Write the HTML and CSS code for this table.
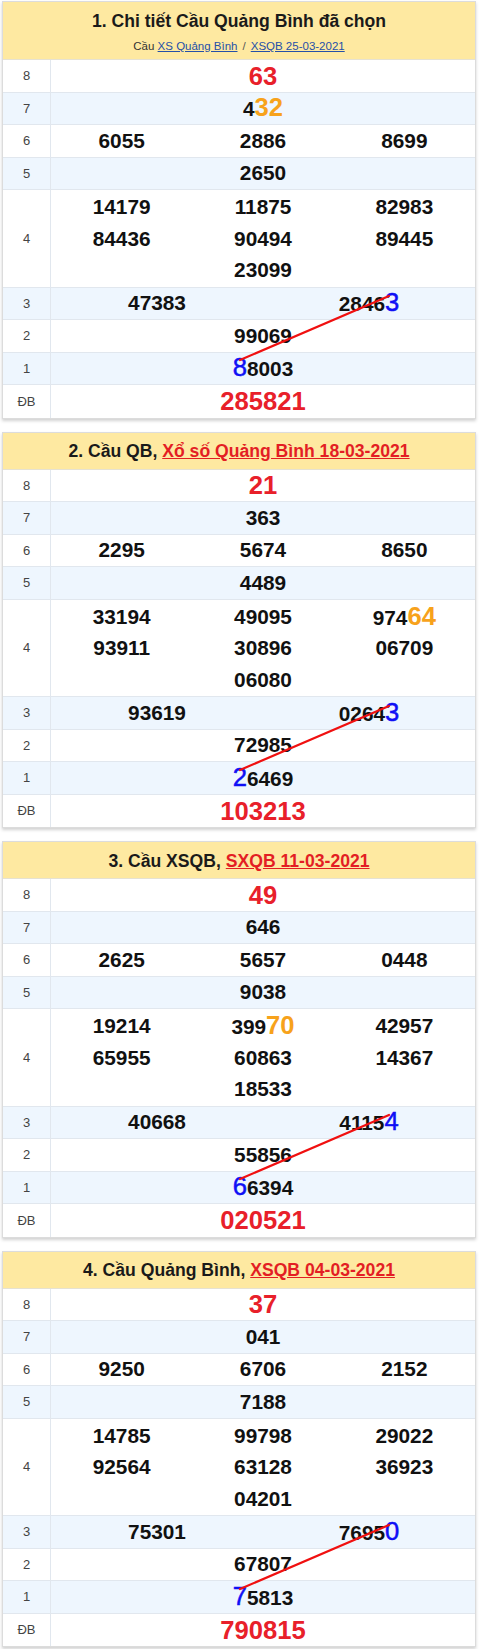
FILE: index.html
```html
<!DOCTYPE html>
<html lang="vi">
<head>
<meta charset="utf-8">
<title>Cầu Quảng Bình</title>
<link rel="stylesheet" href="styles.css">
</head>
<body>
<div class="page">

  <section class="card">
    <header class="head head-double">
      <h2 class="title">1. Chi tiết Cầu Quảng Bình đã chọn</h2>
      <p class="sub">Cầu <a class="sub-link" href="#">XS Quảng Bình</a><span class="sep">/</span><a class="sub-link" href="#">XSQB 25-03-2021</a></p>
    </header>
    <div class="board">
      <div class="row"><div class="lbl">8</div><div class="vals cols-1"><span class="n hl red">63</span></div></div>
      <div class="row alt"><div class="lbl">7</div><div class="vals cols-1"><span class="n">4<span class="hl org">32</span></span></div></div>
      <div class="row"><div class="lbl">6</div><div class="vals cols-3"><span class="n">6055</span><span class="n">2886</span><span class="n">8699</span></div></div>
      <div class="row alt"><div class="lbl">5</div><div class="vals cols-1"><span class="n">2650</span></div></div>
      <div class="row tall"><div class="lbl">4</div><div class="vals cols-3"><span class="n">14179</span><span class="n">11875</span><span class="n">82983</span><span class="n">84436</span><span class="n">90494</span><span class="n">89445</span><span class="n mid">23099</span></div></div>
      <div class="row alt"><div class="lbl">3</div><div class="vals cols-2"><span class="n">47383</span><span class="n">2846<span class="hl blu">3</span></span></div></div>
      <div class="row"><div class="lbl">2</div><div class="vals cols-1"><span class="n">99069</span></div></div>
      <div class="row alt"><div class="lbl">1</div><div class="vals cols-1"><span class="n"><span class="hl blu">8</span>8003</span></div></div>
      <div class="row last"><div class="lbl">ĐB</div><div class="vals cols-1"><span class="n hl red">285821</span></div></div>
      <svg class="bridge" width="472" height="358"><line x1="237" y1="300" x2="386" y2="236"/></svg>
    </div>
  </section>

  <section class="card">
    <header class="head">
      <h2 class="title">2. Cầu QB, <a class="head-link" href="#">Xổ số Quảng Bình 18-03-2021</a></h2>
    </header>
    <div class="board">
      <div class="row"><div class="lbl">8</div><div class="vals cols-1"><span class="n hl red">21</span></div></div>
      <div class="row alt"><div class="lbl">7</div><div class="vals cols-1"><span class="n">363</span></div></div>
      <div class="row"><div class="lbl">6</div><div class="vals cols-3"><span class="n">2295</span><span class="n">5674</span><span class="n">8650</span></div></div>
      <div class="row alt"><div class="lbl">5</div><div class="vals cols-1"><span class="n">4489</span></div></div>
      <div class="row tall"><div class="lbl">4</div><div class="vals cols-3"><span class="n">33194</span><span class="n">49095</span><span class="n">974<span class="hl org">64</span></span><span class="n">93911</span><span class="n">30896</span><span class="n">06709</span><span class="n mid">06080</span></div></div>
      <div class="row alt"><div class="lbl">3</div><div class="vals cols-2"><span class="n">93619</span><span class="n">0264<span class="hl blu">3</span></span></div></div>
      <div class="row"><div class="lbl">2</div><div class="vals cols-1"><span class="n">72985</span></div></div>
      <div class="row alt"><div class="lbl">1</div><div class="vals cols-1"><span class="n"><span class="hl blu">2</span>6469</span></div></div>
      <div class="row last"><div class="lbl">ĐB</div><div class="vals cols-1"><span class="n hl red">103213</span></div></div>
      <svg class="bridge" width="472" height="358"><line x1="237" y1="300" x2="386" y2="236"/></svg>
    </div>
  </section>

  <section class="card">
    <header class="head">
      <h2 class="title">3. Cầu XSQB, <a class="head-link" href="#">SXQB 11-03-2021</a></h2>
    </header>
    <div class="board">
      <div class="row"><div class="lbl">8</div><div class="vals cols-1"><span class="n hl red">49</span></div></div>
      <div class="row alt"><div class="lbl">7</div><div class="vals cols-1"><span class="n">646</span></div></div>
      <div class="row"><div class="lbl">6</div><div class="vals cols-3"><span class="n">2625</span><span class="n">5657</span><span class="n">0448</span></div></div>
      <div class="row alt"><div class="lbl">5</div><div class="vals cols-1"><span class="n">9038</span></div></div>
      <div class="row tall"><div class="lbl">4</div><div class="vals cols-3"><span class="n">19214</span><span class="n">399<span class="hl org">70</span></span><span class="n">42957</span><span class="n">65955</span><span class="n">60863</span><span class="n">14367</span><span class="n mid">18533</span></div></div>
      <div class="row alt"><div class="lbl">3</div><div class="vals cols-2"><span class="n">40668</span><span class="n">4115<span class="hl blu">4</span></span></div></div>
      <div class="row"><div class="lbl">2</div><div class="vals cols-1"><span class="n">55856</span></div></div>
      <div class="row alt"><div class="lbl">1</div><div class="vals cols-1"><span class="n"><span class="hl blu">6</span>6394</span></div></div>
      <div class="row last"><div class="lbl">ĐB</div><div class="vals cols-1"><span class="n hl red">020521</span></div></div>
      <svg class="bridge" width="472" height="358"><line x1="237" y1="300" x2="386" y2="236"/></svg>
    </div>
  </section>

  <section class="card">
    <header class="head">
      <h2 class="title">4. Cầu Quảng Bình, <a class="head-link" href="#">XSQB 04-03-2021</a></h2>
    </header>
    <div class="board">
      <div class="row"><div class="lbl">8</div><div class="vals cols-1"><span class="n hl red">37</span></div></div>
      <div class="row alt"><div class="lbl">7</div><div class="vals cols-1"><span class="n">041</span></div></div>
      <div class="row"><div class="lbl">6</div><div class="vals cols-3"><span class="n">9250</span><span class="n">6706</span><span class="n">2152</span></div></div>
      <div class="row alt"><div class="lbl">5</div><div class="vals cols-1"><span class="n">7188</span></div></div>
      <div class="row tall"><div class="lbl">4</div><div class="vals cols-3"><span class="n">14785</span><span class="n">99798</span><span class="n">29022</span><span class="n">92564</span><span class="n">63128</span><span class="n">36923</span><span class="n mid">04201</span></div></div>
      <div class="row alt"><div class="lbl">3</div><div class="vals cols-2"><span class="n">75301</span><span class="n">7695<span class="hl blu">0</span></span></div></div>
      <div class="row"><div class="lbl">2</div><div class="vals cols-1"><span class="n">67807</span></div></div>
      <div class="row alt"><div class="lbl">1</div><div class="vals cols-1"><span class="n"><span class="hl blu">7</span>5813</span></div></div>
      <div class="row last"><div class="lbl">ĐB</div><div class="vals cols-1"><span class="n hl red">790815</span></div></div>
      <svg class="bridge" width="472" height="358"><line x1="237" y1="300" x2="386" y2="236"/></svg>
    </div>
  </section>

</div>
</body>
</html>
```

FILE: styles.css
```css
* { box-sizing: border-box; }

body {
  margin: 0;
  background: #ffffff;
  font-family: "Liberation Sans", Arial, sans-serif;
  color: #111;
}

.page {
  padding: 1px 4px 2px 2px;
  display: flex;
  flex-direction: column;
  gap: 13px;
}

.card {
  border: 1px solid #dcdcdc;
  background: #fff;
  box-shadow: 0 2px 3px rgba(0, 0, 0, 0.18);
}

.head {
  background: #fee9a1;
  border-bottom: 1px solid #e6e2d2;
  text-align: center;
  padding: 6.5px 0 5.5px;
}

.head-double {
  padding: 7px 0 3px;
}

.title {
  margin: 0;
  font-size: 17.6px;
  line-height: 24px;
  font-weight: bold;
  color: #1a1a1a;
}

.head-link {
  color: #e31e24;
  text-decoration: underline;
}

.sub {
  margin: 3px 0 0;
  font-size: 11.5px;
  line-height: 20px;
  color: #333;
}

.sub-link {
  color: #2550a8;
  text-decoration: underline;
}

.sep {
  margin: 0 5px;
  color: #555;
}

.board {
  position: relative;
}

.row {
  display: grid;
  grid-template-columns: 48px 1fr;
  height: 32.5px;
  border-bottom: 1px solid #e1e7ee;
}

.row.alt {
  background: #eef6fe;
}

.row.tall {
  height: 97.5px;
}

.row.last {
  border-bottom: none;
}

.lbl {
  border-right: 1px solid #e1e7ee;
  display: flex;
  align-items: center;
  justify-content: center;
  font-size: 13px;
  color: #444;
}

.vals {
  display: grid;
  align-items: center;
  justify-items: center;
}

.cols-1 { grid-template-columns: 1fr; }
.cols-2 { grid-template-columns: repeat(2, 1fr); }
.cols-3 { grid-template-columns: repeat(3, 1fr); }

.tall .vals {
  grid-template-rows: repeat(3, 31.5px);
  align-content: start;
  padding-top: 1.5px;
}

.mid {
  grid-column: 2;
}

.n {
  font-size: 20.8px;
  font-weight: bold;
  line-height: 24px;
  color: #111;
  white-space: nowrap;
}

.hl {
  font-size: 25.6px;
}

.red { color: #e8202a; }
.org { color: #f7a21b; }
.blu {
  color: #0f0ff5;
  font-weight: normal;
  -webkit-text-stroke: 0.5px #0f0ff5;
}

.bridge {
  position: absolute;
  left: 0;
  top: 0;
  pointer-events: none;
  overflow: visible;
}

.bridge line {
  stroke: #f01010;
  stroke-width: 2.2;
  stroke-linecap: round;
}
```
